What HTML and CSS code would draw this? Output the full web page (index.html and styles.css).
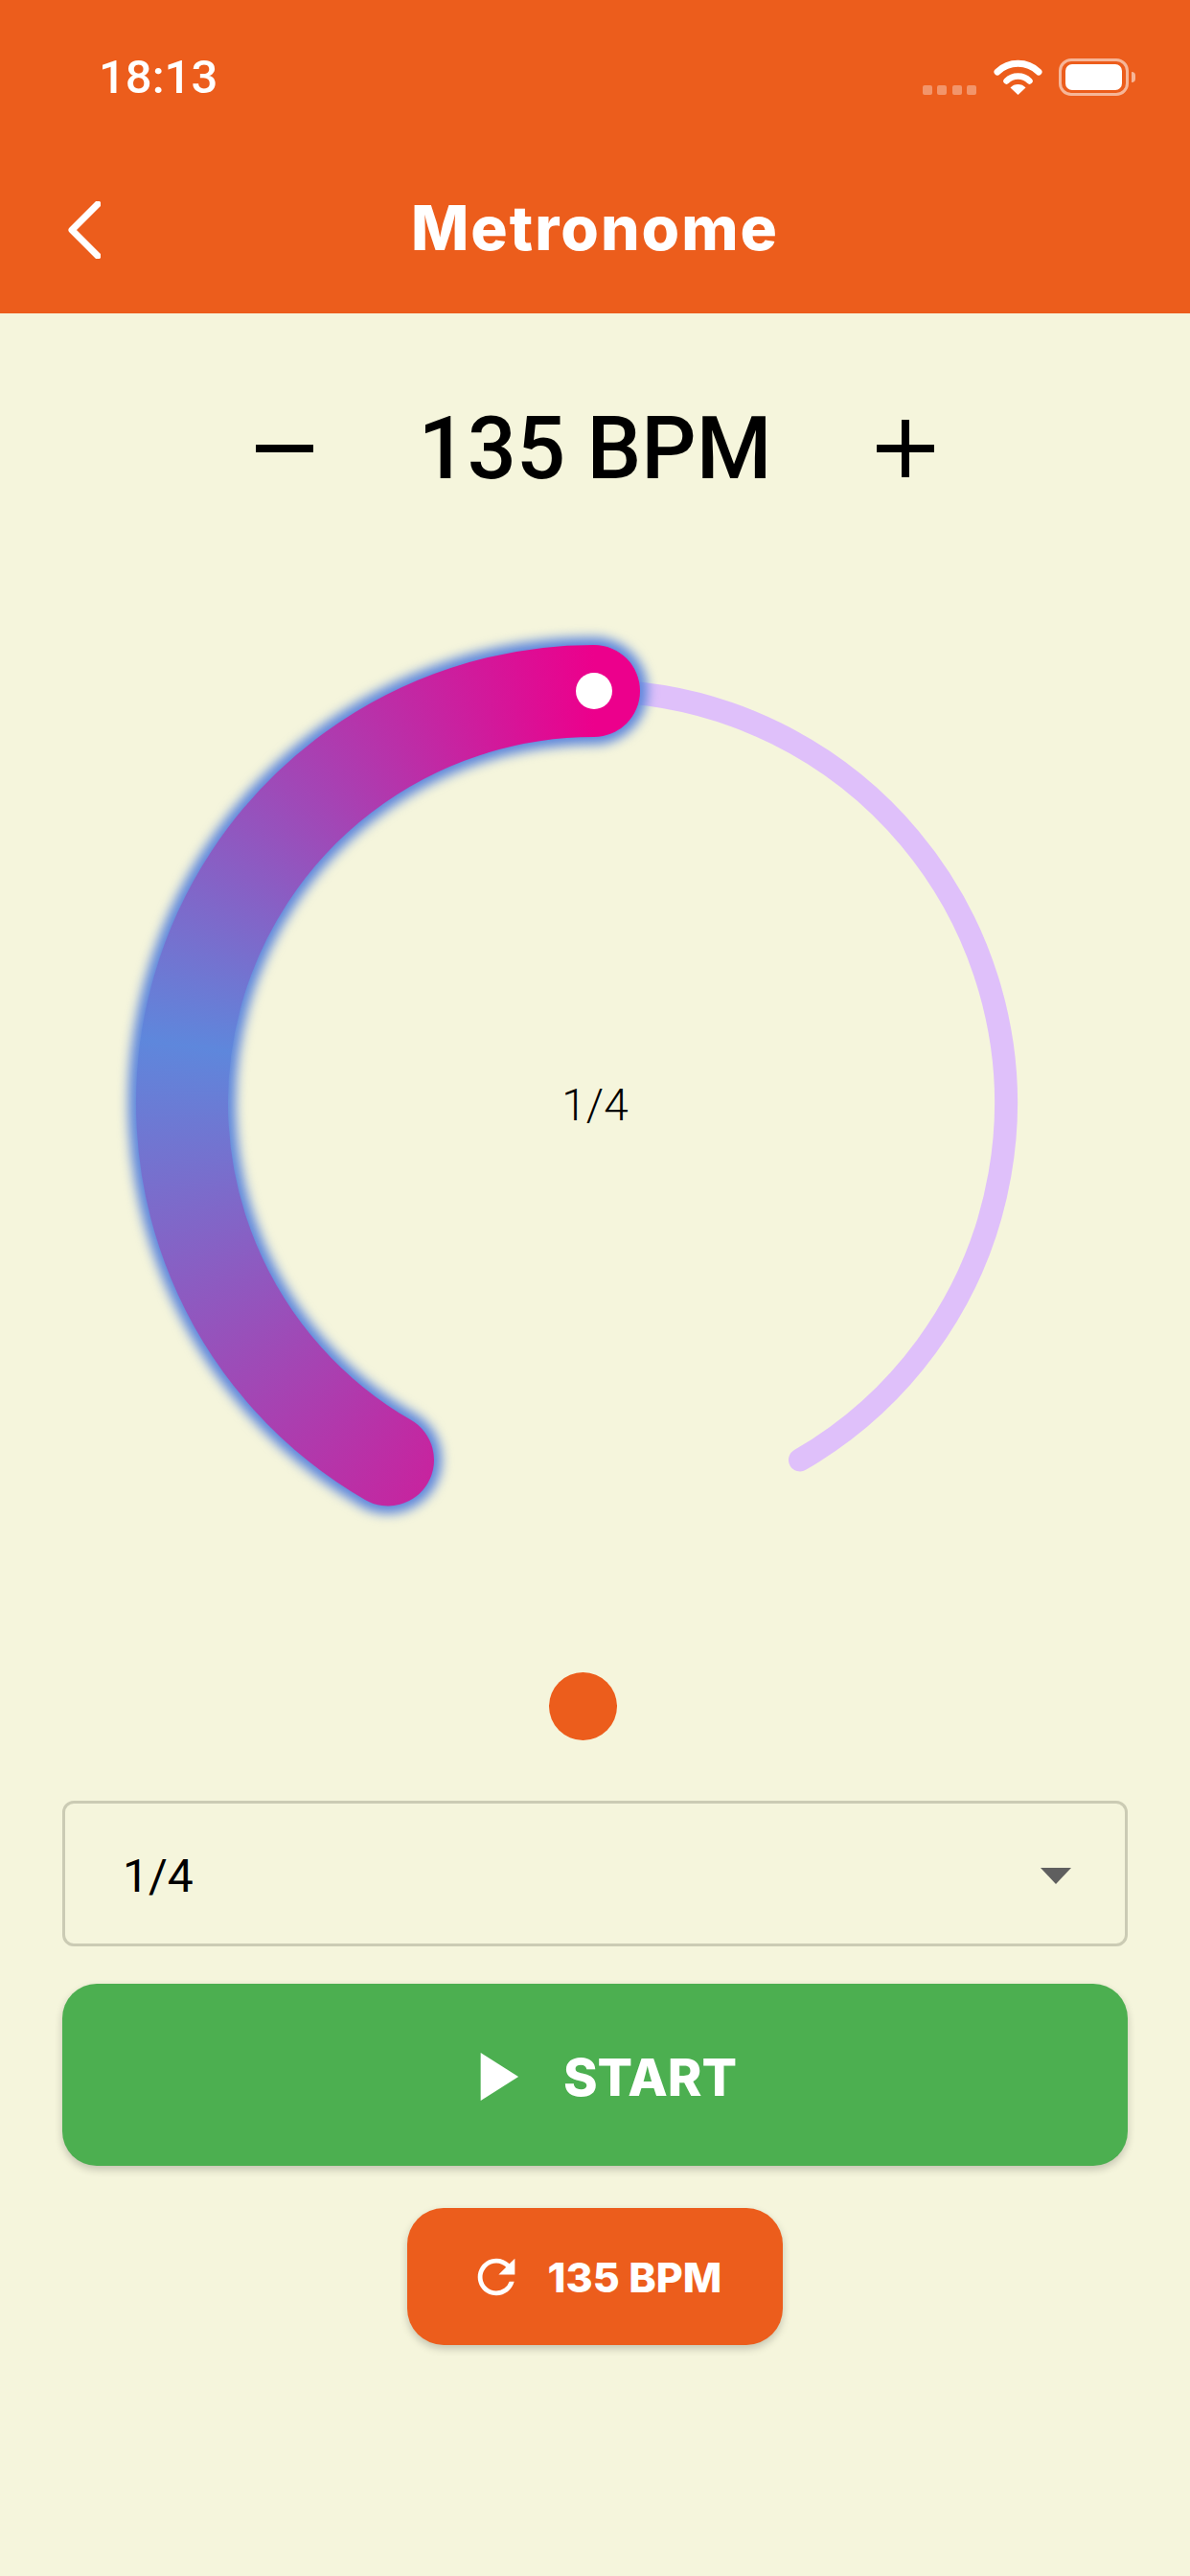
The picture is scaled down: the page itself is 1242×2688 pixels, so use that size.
FILE: index.html
```html
<!DOCTYPE html>
<html lang="en">
<head>
    <meta charset="UTF-8">
    <meta name="viewport" content="width=device-width, initial-scale=1.0">
    <title>Metronome</title>
    <link rel="stylesheet" href="styles.css">
</head>
<body>
    <header class="header">
        <div class="status-bar">
            <span class="time">18:13</span>
            <div class="status-icons">
                <div class="signal"><i></i><i></i><i></i><i></i></div>
                <svg class="wifi" viewBox="0 0 51 38">
                    <path d="M4 14A31 31 0 0 1 47 14" fill="none" stroke="#fff" stroke-width="7" stroke-linecap="round"/>
                    <path d="M13.5 23.5A17 17 0 0 1 37.5 23.5" fill="none" stroke="#fff" stroke-width="6.5" stroke-linecap="round"/>
                    <path d="M17.5 30.5A11 11 0 0 1 33.5 30.5L25.5 38Z" fill="#fff"/>
                </svg>
                <div class="battery"><div class="battery-level"></div></div>
                <div class="battery-nub"></div>
            </div>
        </div>
        <div class="app-bar">
            <button class="back-btn">
                <svg viewBox="0 0 34 60" fill="none" stroke="#fff" stroke-width="7" stroke-linecap="round" stroke-linejoin="round">
                    <polyline points="31,3 4,30 31,57"/>
                </svg>
            </button>
            <h1>Metronome</h1>
        </div>
    </header>

    <main class="container">
        <div class="bpm-row">
            <svg class="step-icon" viewBox="0 0 60 60"><rect x="0" y="26" width="60" height="8" fill="#000"/></svg>
            <span class="bpm-value">135 BPM</span>
            <svg class="step-icon" viewBox="0 0 60 60"><rect x="0" y="26" width="60" height="8" fill="#000"/><rect x="26" y="0" width="8" height="60" fill="#000"/></svg>
        </div>

        <div class="dial">
            <svg class="dial-arc" viewBox="1 0 1000 1000">
                <defs>
                    <mask id="valueMask" maskUnits="userSpaceOnUse" x="0" y="0" width="1002" height="1000">
                        <path d="M285 872.4A430 430 0 0 1 500 70" fill="none" stroke="#fff" stroke-width="96" stroke-linecap="round"/>
                    </mask>
                </defs>
                <path d="M285 872.4A430 430 0 1 1 715 872.4" fill="none" stroke="#dfc0fa" stroke-width="24" stroke-linecap="round"/>
                <path class="dial-glow" d="M285 872.4A430 430 0 0 1 500 70" fill="none" stroke="#5e87dc" stroke-width="112" stroke-linecap="round"/>
                <g mask="url(#valueMask)">
                    <foreignObject x="0" y="0" width="1000" height="1000">
                        <div xmlns="http://www.w3.org/1999/xhtml" class="dial-sweep"></div>
                    </foreignObject>
                </g>
                <circle cx="500" cy="70" r="19" fill="#fff"/>
            </svg>
            <span class="dial-label">1/4</span>
        </div>

        <div class="beat-dot"></div>

        <div class="select">
            <span>1/4</span>
            <div class="select-arrow"></div>
        </div>

        <button class="start-btn">
            <svg viewBox="0 0 24 24" fill="#fff"><path d="M8 5v14l11-7z"/></svg>
            <span>START</span>
        </button>

        <button class="reset-btn">
            <svg viewBox="0 0 24 24" fill="#fff"><path d="M17.65 6.35A7.958 7.958 0 0 0 12 4c-4.42 0-7.99 3.58-7.99 8s3.57 8 7.99 8c3.73 0 6.84-2.55 7.73-6h-2.08A5.99 5.99 0 0 1 12 18c-3.31 0-6-2.69-6-6s2.69-6 6-6c1.66 0 3.14.69 4.22 1.78L13 11h7V4l-2.35 2.35z"/></svg>
            <span>135 BPM</span>
        </button>
    </main>
</body>
</html>
```

FILE: styles.css
```css
:root {
    --primary: #ec5d1c;
    --background: #f5f5dc;
    --green: #4caf50;
}

* {
    margin: 0;
    padding: 0;
    box-sizing: border-box;
}

body {
    font-family: Roboto, "Liberation Sans", sans-serif;
    background: var(--background);
    color: #000;
    min-height: 100vh;
}

button {
    border: none;
    background: none;
    font-family: Inter, "Liberation Sans", sans-serif;
    color: #fff;
}

.header {
    background: var(--primary);
    color: #fff;
    height: 327px;
}

.status-bar {
    height: 160px;
    padding: 0 57px 0 103px;
    display: flex;
    justify-content: space-between;
    align-items: center;
}

.time {
    font-size: 49px;
    font-weight: 500;
}

.status-icons {
    display: flex;
    align-items: center;
}

.signal {
    display: flex;
    gap: 5.5px;
    margin: 28px 18px 0 0;
}

.signal i {
    width: 10px;
    height: 10px;
    border-radius: 2px;
    background: rgba(255,255,255,0.35);
}

.wifi {
    width: 51px;
    height: 38px;
    margin-right: 17px;
}

.battery {
    width: 73px;
    height: 39px;
    border: 3px solid rgba(255,255,255,0.55);
    border-radius: 13px;
    padding: 3px 4px;
}

.battery-level {
    height: 100%;
    background: #fff;
    border-radius: 7px;
}

.battery-nub {
    width: 4px;
    height: 11px;
    margin-left: 3px;
    background: rgba(255,255,255,0.55);
    border-radius: 0 4px 4px 0;
}

.app-bar {
    height: 160px;
    display: grid;
    grid-template-columns: 1fr auto 1fr;
    align-items: center;
}

.app-bar h1 {
    grid-column: 2;
    grid-row: 1;
    margin-bottom: 6px;
    font-family: Inter, "Liberation Sans", sans-serif;
    font-size: 64px;
    font-weight: 800;
    letter-spacing: 2px;
}

.back-btn {
    grid-column: 1;
    grid-row: 1;
    justify-self: start;
    margin-left: 71px;
    display: flex;
}

.back-btn svg {
    width: 34px;
    height: 60px;
}

.container {
    padding: 86px 65px 0;
    display: flex;
    flex-direction: column;
    align-items: center;
}

.bpm-row {
    height: 110px;
    display: flex;
    align-items: center;
    gap: 110px;
}

.step-icon {
    width: 60px;
    height: 60px;
}

.bpm-value {
    font-size: 90px;
    font-weight: 500;
    white-space: nowrap;
}

.dial {
    margin-top: 128px;
    display: grid;
    place-items: center;
}

.dial-arc,
.dial-label {
    grid-area: 1 / 1;
}

.dial-arc {
    width: 1000px;
    height: 1000px;
    display: block;
}

.dial-glow {
    filter: blur(6px);
}

.dial-sweep {
    width: 1000px;
    height: 1000px;
    background: conic-gradient(#ec008c 0deg, #ec008c 10deg, #cc1f9c 200deg, #5e87dc 278deg, #ec008c 360deg);
}

.dial-label {
    font-size: 46px;
    font-weight: 300;
    margin-top: 4px;
}

.beat-dot {
    width: 71px;
    height: 71px;
    margin: 94px 26px 0 0;
    border-radius: 50%;
    background: var(--primary);
}

.select {
    width: 100%;
    height: 152px;
    margin-top: 63px;
    padding: 4px 56px 0 60px;
    border: 3px solid #cbcbb4;
    border-radius: 12px;
    display: flex;
    justify-content: space-between;
    align-items: center;
    font-size: 48px;
}

.select-arrow {
    width: 0;
    height: 0;
    border-left: 16px solid transparent;
    border-right: 16px solid transparent;
    border-top: 17px solid #5f5f5f;
}

.start-btn {
    width: 100%;
    height: 190px;
    margin-top: 39px;
    padding-top: 4px;
    background: var(--green);
    border-radius: 36px;
    box-shadow: 0 4px 8px rgba(0,0,0,0.2);
    display: flex;
    justify-content: center;
    align-items: center;
    gap: 29px;
    font-size: 54px;
    font-weight: 800;
}

.start-btn svg {
    width: 86px;
    height: 86px;
}

.reset-btn {
    height: 143px;
    margin-top: 44px;
    padding: 0 64px;
    background: var(--primary);
    border-radius: 38px;
    box-shadow: 0 4px 8px rgba(0,0,0,0.2);
    display: flex;
    align-items: center;
    gap: 25px;
    font-size: 43px;
    font-weight: 800;
}

.reset-btn svg {
    width: 58px;
    height: 58px;
}
```
